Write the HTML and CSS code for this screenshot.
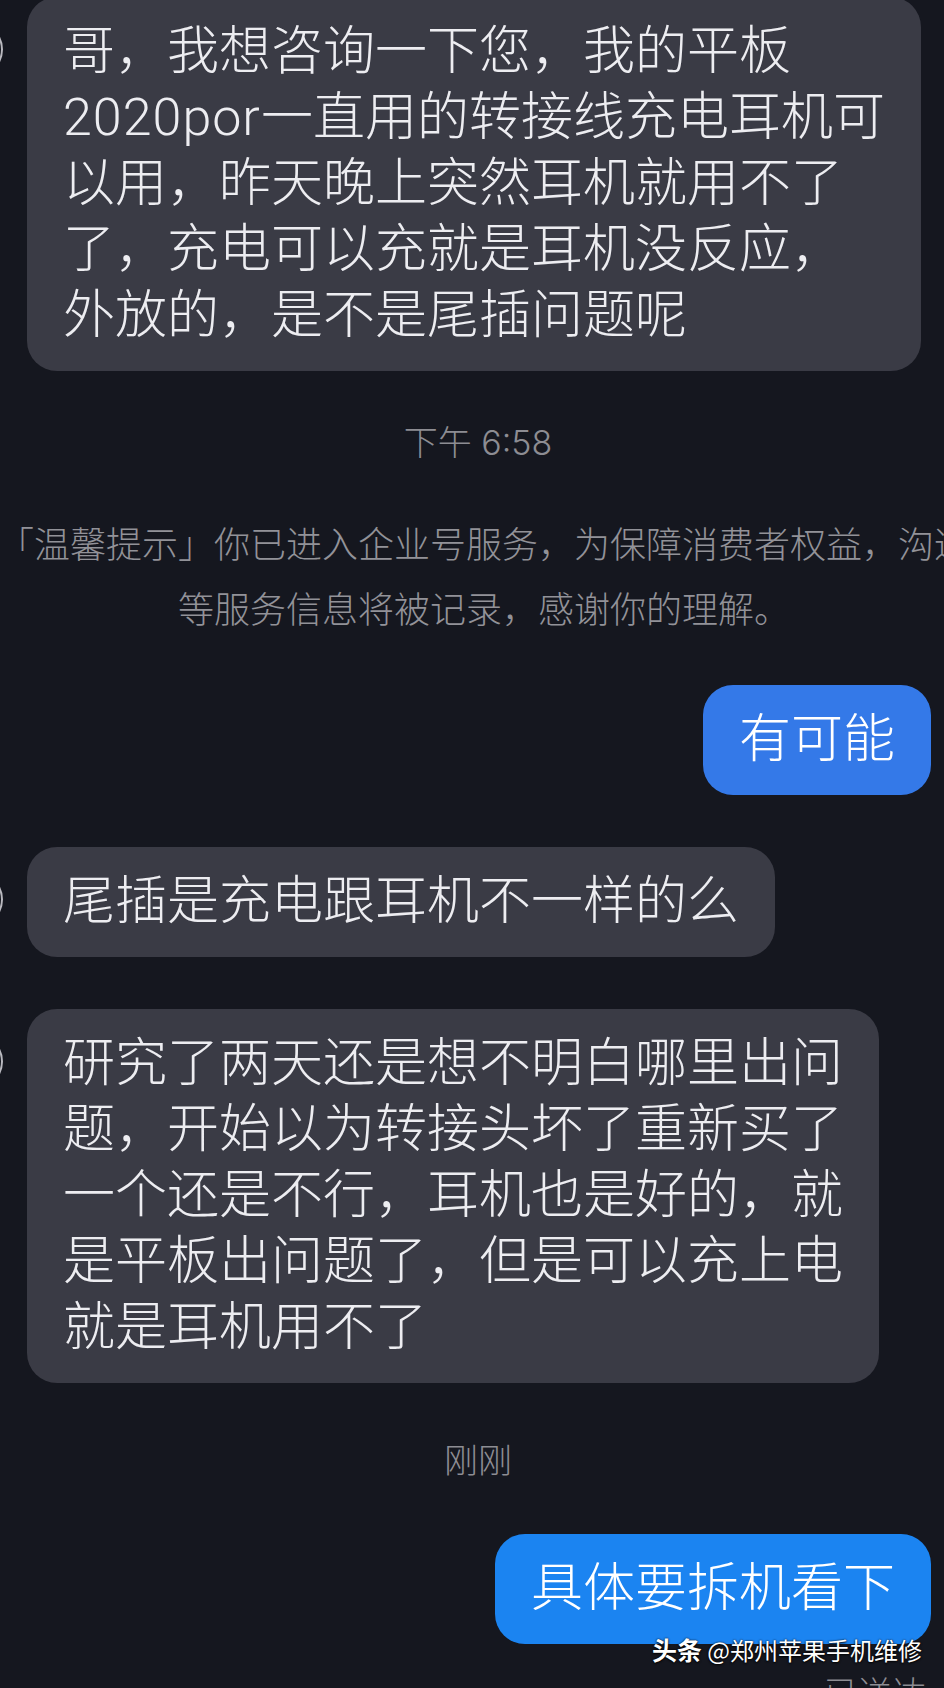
FILE: index.html
```html
<!DOCTYPE html>
<html lang="zh-CN">
<head>
<meta charset="utf-8">
<title>聊天</title>
<link rel="stylesheet" href="styles.css">
</head>
<body>
<div class="chat">
  <div class="row left first">
    <span class="peek"></span>
    <div class="bubble in">哥，我想咨询一下您，我的平板<br><span class="latin">2020por</span>一直用的转接线充电耳机可<br>以用，昨天晚上突然耳机就用不了<br>了，充电可以充就是耳机没反应，<br>外放的，是不是尾插问题呢</div>
  </div>

  <div class="time t1">下午 6:58</div>

  <div class="sys">
    <span class="sys-line">「温馨提示」你已进入企业号服务，为保障消费者权益，沟通</span>
    <span class="sys-line">等服务信息将被记录，感谢你的理解。</span>
  </div>

  <div class="row right r1">
    <div class="bubble out out-a">有可能</div>
  </div>

  <div class="row left gap">
    <span class="peek"></span>
    <div class="bubble in">尾插是充电跟耳机不一样的么</div>
  </div>

  <div class="row left gap">
    <span class="peek"></span>
    <div class="bubble in">研究了两天还是想不明白哪里出问<br>题，开始以为转接头坏了重新买了<br>一个还是不行，耳机也是好的，就<br>是平板出问题了，但是可以充上电<br>就是耳机用不了</div>
  </div>

  <div class="time t2">刚刚</div>

  <div class="row right r2">
    <div class="bubble out out-b">具体要拆机看下</div>
  </div>

  <div class="status">已送达</div>
</div>

<div class="watermark"><b class="wm-brand">头条</b> <span class="wm-name">@郑州苹果手机维修</span></div>
</body>
</html>
```

FILE: styles.css
```css
html {
  overflow: hidden;
}

body {
  margin: 0;
  background: #15171f;
  font-family: "Roboto", "Noto Sans CJK SC", sans-serif;
  position: relative;
  min-height: 1688px;
  overflow: hidden;
}

.chat {
  display: flex;
  flex-direction: column;
}

.row {
  display: flex;
  position: relative;
}

.row.left {
  padding-left: 27px;
  justify-content: flex-start;
}

.row.right {
  padding-right: 13px;
  justify-content: flex-end;
}

.row.first {
  margin-top: -3px;
}

.row.gap {
  margin-top: 52px;
}

.row.r1 {
  margin-top: 45px;
}

.row.r2 {
  margin-top: 53px;
}

.peek {
  position: absolute;
  left: -52px;
  top: 25px;
  width: 51px;
  height: 51px;
  border-radius: 50%;
  border: 2px solid #b9b9bf;
}

.bubble {
  padding: 22px 36px;
  font-size: 52px;
  line-height: 66px;
  font-weight: 300;
  border-radius: 30px;
  white-space: nowrap;
}

.latin {
  letter-spacing: 1px;
}

.bubble.in {
  background: #3a3b45;
  color: #ededf1;
}

.bubble.out {
  color: #ffffff;
}

.out-a {
  background: #3479e8;
}

.out-b {
  background: #1b84f1;
}

.time {
  align-self: stretch;
  padding-left: 12px;
  text-align: center;
  font-family: "Inter", "Noto Sans CJK SC", sans-serif;
  font-size: 34px;
  line-height: 40px;
  font-weight: 300;
  color: #8d8d93;
}

.time.t1 {
  margin-top: 52px;
}

.time.t2 {
  margin-top: 58px;
}

.sys {
  margin-top: 47px;
  padding-left: 24px;
  display: flex;
  flex-direction: column;
  align-items: center;
  font-family: "Noto Sans CJK SC", sans-serif;
  font-size: 36px;
  line-height: 65px;
  font-weight: 300;
  color: #929298;
}

.sys-line {
  white-space: nowrap;
}

.status {
  margin-top: 28px;
  padding-right: 18px;
  text-align: right;
  font-family: "Noto Sans CJK SC", sans-serif;
  font-size: 34px;
  line-height: 40px;
  font-weight: 300;
  color: #8d8d93;
}

.watermark {
  position: absolute;
  top: 1634px;
  right: 22px;
  font-family: "Noto Sans CJK SC", sans-serif;
  font-size: 24px;
  line-height: 30px;
  color: #ffffff;
  text-shadow: 0 0 2px rgba(0, 0, 0, 0.9), 0 1px 2px rgba(0, 0, 0, 0.8);
  white-space: nowrap;
}

.wm-brand {
  font-weight: 700;
  font-size: 25px;
}
```
